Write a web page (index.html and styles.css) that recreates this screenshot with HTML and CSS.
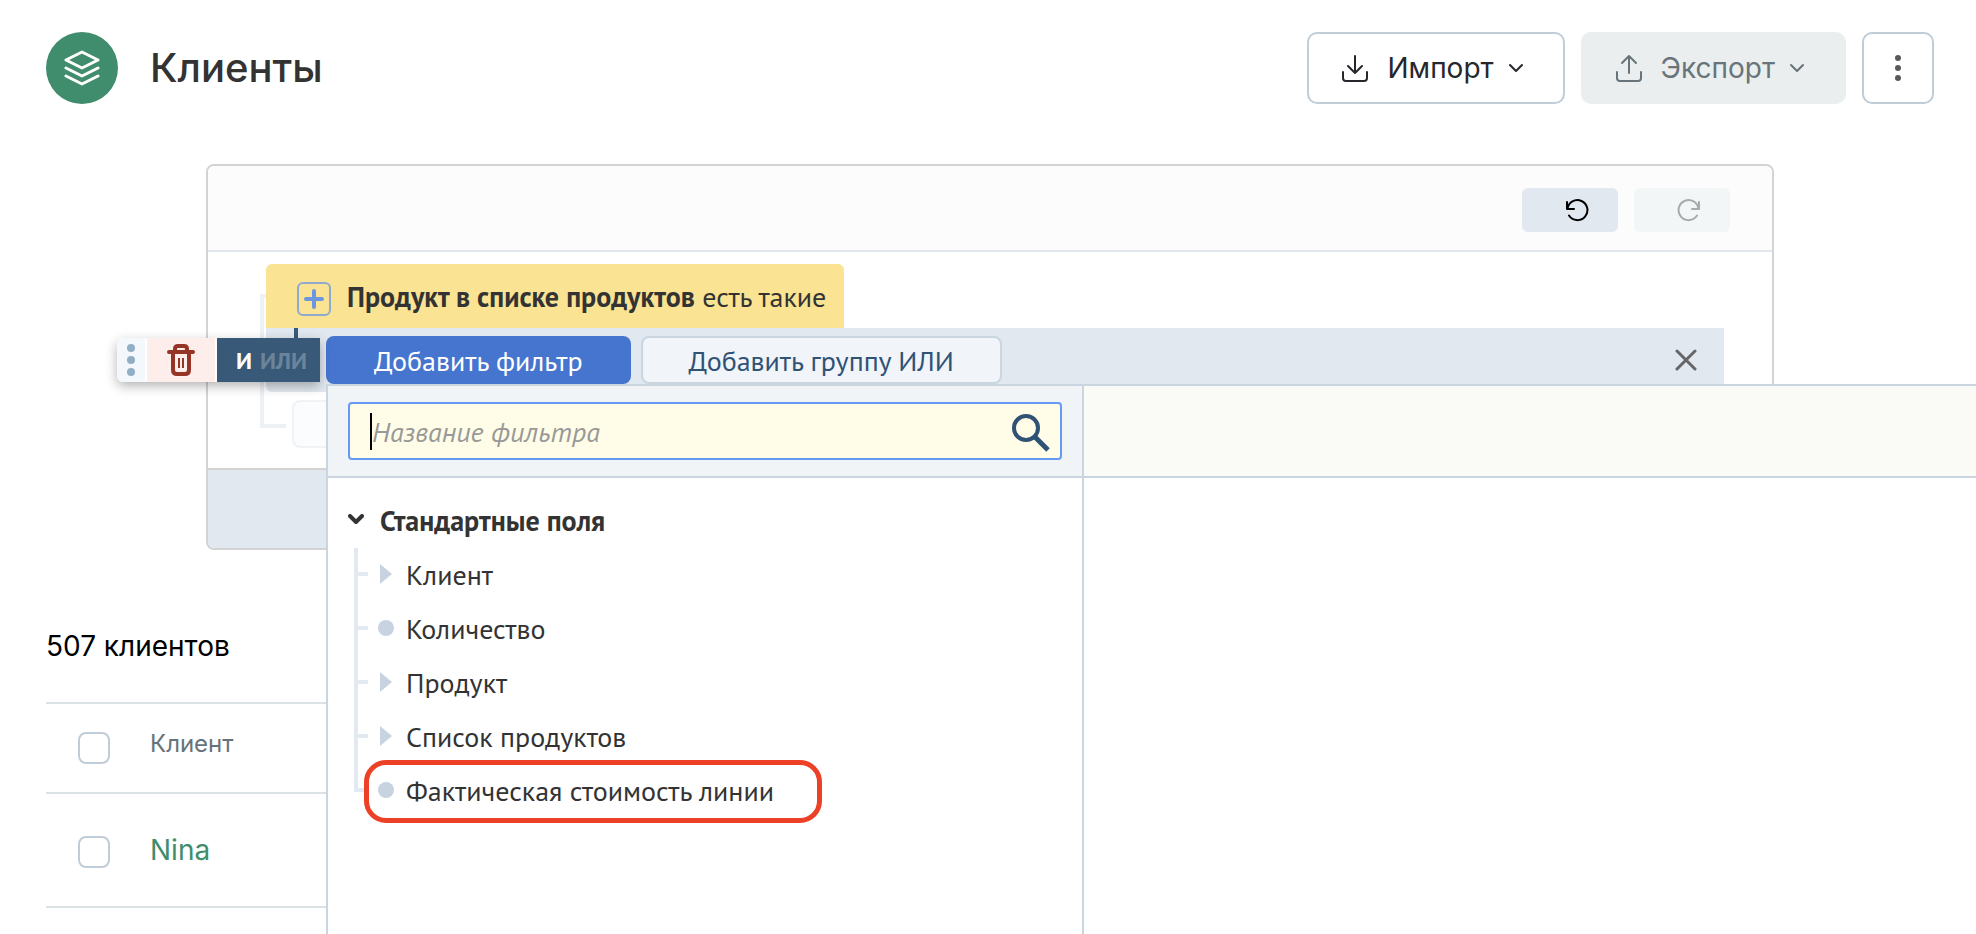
FILE: index.html
```html
<!DOCTYPE html>
<html lang="ru">
<head>
<meta charset="utf-8">
<title>Клиенты</title>
<link rel="stylesheet" href="styles.css">
</head>
<body>
<div class="page">
  <header class="topbar">
    <span class="logo">
      <svg width="36" height="36" viewBox="0 0 36 36" fill="none" stroke="#fff" stroke-width="3" stroke-linejoin="round" stroke-linecap="round"><path d="M18 2 34 10 18 18 2 10Z"/><path d="M2 18l16 8 16-8M2 26l16 8 16-8"/></svg>
    </span>
    <h1 class="title">Клиенты</h1>
    <div class="actions">
      <button class="btn" type="button">
        <svg width="28" height="28" viewBox="0 0 28 28" fill="none" stroke="currentColor" stroke-width="2" stroke-linecap="round" stroke-linejoin="round"><path d="M14 2v17M7 12l7 7 7-7M2 18v6q0 3 3 3h18q3 0 3-3v-6"/></svg>
        <span>Импорт</span>
        <svg class="caret" width="16" height="16" viewBox="0 0 16 16" fill="none" stroke="currentColor" stroke-width="2" stroke-linecap="round" stroke-linejoin="round"><path d="M2 5l6 6 6-6"/></svg>
      </button>
      <button class="btn btn-muted" type="button">
        <svg width="28" height="28" viewBox="0 0 28 28" fill="none" stroke="currentColor" stroke-width="2" stroke-linecap="round" stroke-linejoin="round"><path d="M14 19V2M7 9l7-7 7 7M2 18v6q0 3 3 3h18q3 0 3-3v-6"/></svg>
        <span>Экспорт</span>
        <svg class="caret" width="16" height="16" viewBox="0 0 16 16" fill="none" stroke="currentColor" stroke-width="2" stroke-linecap="round" stroke-linejoin="round"><path d="M2 5l6 6 6-6"/></svg>
      </button>
      <button class="btn btn-more" type="button" aria-label="Ещё">
        <svg width="6" height="26" viewBox="0 0 6 26" fill="#575b5e"><circle cx="3" cy="3" r="3"/><circle cx="3" cy="13" r="3"/><circle cx="3" cy="23" r="3"/></svg>
      </button>
    </div>
  </header>

  <section class="panel">
    <div class="panel-head">
      <button class="history" type="button" aria-label="Отменить">
        <svg width="24" height="24" viewBox="0 0 24 24" fill="none" stroke="#000" stroke-width="2" stroke-linecap="round" stroke-linejoin="round"><path d="M2 4v7h7M2.500 11A10 10 0 1 1 4 17.500"/></svg>
      </button>
      <button class="history history-off" type="button" aria-label="Повторить" disabled>
        <svg width="24" height="24" viewBox="0 0 24 24" fill="none" stroke="#a8abad" stroke-width="2" stroke-linecap="round" stroke-linejoin="round"><path d="M22 4v7h-7M21.500 11A10 10 0 1 0 20 17.500"/></svg>
      </button>
    </div>
    <div class="panel-body">
      <div class="branch"></div>
      <div class="rules">
        <div class="rule">
          <button class="plus" type="button" aria-label="Развернуть">
            <svg width="20" height="20" viewBox="0 0 20 20" stroke="#6c96de" stroke-width="4" stroke-linecap="round"><path d="M10 2v16M2 10h16"/></svg>
          </button>
          <span><b>Продукт в списке продуктов</b> есть такие</span>
        </div>
        <div class="group">
          <button class="add add-main" type="button">Добавить фильтр</button>
          <button class="add add-alt" type="button">Добавить группу ИЛИ</button>
          <button class="close" type="button" aria-label="Закрыть">
            <svg width="22" height="22" viewBox="0 0 22 22" stroke="#666" stroke-width="3" stroke-linecap="round"><path d="M2 2l18 18M20 2 2 20"/></svg>
          </button>
          <div class="toolbar">
            <span class="grip">
              <svg width="8" height="32" viewBox="0 0 8 32" fill="#91aec4"><circle cx="4" cy="4" r="4"/><circle cx="4" cy="16" r="4"/><circle cx="4" cy="28" r="4"/></svg>
            </span>
            <button class="trash" type="button" aria-label="Удалить">
              <svg width="28" height="32" viewBox="0 0 28 32" fill="none" stroke="#963526"><path stroke-width="4" stroke-linecap="round" stroke-linejoin="round" d="M2 8h24M6 8v18q0 4 4 4h8q4 0 4-4V8M8 7V5q0-3 3-3h6q3 0 3 3v2"/><path stroke-width="2" d="M12 14v10M16 14v10"/></svg>
            </button>
            <button class="logic" type="button"><b>И</b><b class="logic-off">ИЛИ</b></button>
          </div>
        </div>
        <div class="ghost"></div>
      </div>
    </div>
    <div class="panel-foot"></div>
  </section>

  <p class="count">507 клиентов</p>
  <table class="list">
    <thead>
      <tr>
        <th class="pick"><input class="check" type="checkbox" aria-label="Выбрать всех"></th>
        <th class="name">Клиент</th>
      </tr>
    </thead>
    <tbody>
      <tr>
        <td class="pick"><input class="check" type="checkbox" aria-label="Выбрать Nina"></td>
        <td class="name"><a href="#">Nina</a></td>
      </tr>
    </tbody>
  </table>

  <div class="popup">
    <div class="popup-main">
      <div class="popup-search">
        <label class="search">
          <span class="cursor"></span>
          <input type="text" placeholder="Название фильтра" aria-label="Название фильтра">
          <svg width="38" height="38" viewBox="0 0 38 38" fill="none" stroke="#2f5275" stroke-width="4"><circle cx="14" cy="14" r="12"/><path stroke-width="5" d="M23 23l13 13"/></svg>
        </label>
      </div>
      <div class="tree">
        <div class="tree-title">
          <svg width="16" height="12" viewBox="0 0 16 12" fill="none" stroke="#333" stroke-width="4" stroke-linecap="round" stroke-linejoin="round"><path d="M2 2l6 6 6-6"/></svg>
          <b>Стандартные поля</b>
        </div>
        <ul class="items">
          <li class="item"><i class="arrow"></i>Клиент</li>
          <li class="item"><i class="dot"></i>Количество</li>
          <li class="item"><i class="arrow"></i>Продукт</li>
          <li class="item"><i class="arrow"></i>Список продуктов</li>
          <li class="item"><i class="dot"></i>Фактическая стоимость линии<span class="marker"></span></li>
        </ul>
      </div>
    </div>
    <div class="popup-side"><div class="side-head"></div></div>
  </div>
</div>
</body>
</html>
```

FILE: styles.css
```css
* { box-sizing: border-box; }
body { margin: 0; background: #fff; color: #333; font-family: Inter, sans-serif; font-size: 28px; }
button { font: inherit; color: inherit; border: 0; margin: 0; padding: 0; background: none; cursor: pointer; }
svg { flex: none; display: block; }
.page { position: relative; min-height: 100vh; padding: 32px 42px 0 46px; overflow: hidden; }

.topbar { display: flex; align-items: center; }
.logo { display: flex; align-items: center; justify-content: center; width: 72px; height: 72px; border-radius: 50%; background: #3f8d6c; }
.title { margin: 0 0 0 32px; font-size: 40px; font-weight: 500; line-height: 72px; }
.actions { display: flex; gap: 16px; margin-left: auto; }
.btn { display: flex; align-items: center; height: 72px; padding: 0 39px 0 32px; border: 2px solid #c0ccd7; border-radius: 10px; background: #fff; color: #26272c; }
.btn span { margin: 0 14px 0 18px; }
.btn-muted { border-color: #eaeeee; background: #eaeeee; color: #68747a; }
.btn-more { justify-content: center; width: 72px; padding: 0; }

.panel { margin: 60px 160px 0; border: 2px solid #d3d3d3; border-radius: 8px; font-family: "PT Sans", "Noto Sans", sans-serif; font-size: 28px; }
.panel-head { display: flex; justify-content: flex-end; align-items: center; gap: 16px; height: 86px; padding: 4px 42px 0 0; border-bottom: 2px solid #e1e8ef; border-radius: 6px 6px 0 0; background: #fcfcfc; }
.history { display: flex; align-items: center; justify-content: center; width: 96px; height: 44px; padding-left: 14px; border-radius: 6px; background: #e1e8ef; }
.history-off { background: #f2f6f6; }
.panel-body { display: flex; padding: 12px 48px 20px 52px; }
.branch { flex: none; width: 26px; margin: 30px -20px 20px 0; border: 4px solid #edf1f6; border-right: 0; }
.rules { position: relative; flex: 1; }
.rule { display: flex; align-items: center; gap: 16px; width: fit-content; height: 64px; padding: 0 18px 0 31px; border-radius: 6px 6px 0 0; background: #fae392; white-space: nowrap; }
.plus { display: flex; align-items: center; justify-content: center; width: 34px; height: 34px; margin-top: 6px; border: 2px solid #8fa9d0; border-radius: 6px; }
.group { position: relative; display: flex; gap: 10px; height: 64px; padding: 8px 27px 8px 60px; border-radius: 0 0 6px 6px; background: #e1e8ef; }
.group::before { content: ""; position: absolute; left: 28px; top: 0; width: 4px; height: 12px; background: #385977; }
.add { height: 48px; border-radius: 8px; white-space: nowrap; }
.add-main { padding: 0 48px; background: #4675d0; color: #fff; }
.add-alt { padding: 0 46px; border: 2px solid #cad5df; background: #f1f4f8; color: #2f5275; }
.close { margin-left: auto; }
.toolbar { position: absolute; left: -149px; top: 10px; display: flex; gap: 2px; height: 44px; border-radius: 6px 0 0 6px; background: #fff; box-shadow: 0 4px 12px rgba(0, 0, 0, .3); }
.grip { display: flex; align-items: center; justify-content: center; width: 28px; border-radius: 6px 0 0 6px; background: #f4f7fb; }
.trash { display: flex; align-items: center; justify-content: center; width: 68px; background: #fdedeb; }
.logic { display: flex; align-items: center; justify-content: center; gap: 8px; width: 103px; padding-left: 6px; background: #385977; color: #fff; font-size: 24px; }
.logic-off { color: #6a849b; }
.ghost { height: 48px; margin: 8px 0 0 26px; border: 2px solid #f0f3f6; border-radius: 8px; background: #fbfcfe; }
.panel-foot { height: 80px; border-top: 2px solid #d3d3d3; border-radius: 0 0 6px 6px; background: #e1e8ef; }

.count { margin: 78px 0 38px; line-height: 36px; color: #000; }
.list { width: 100%; border-collapse: collapse; border-top: 2px solid #dbe2e6; }
.list tr { height: 90px; border-bottom: 2px solid #dbe2e6; }
.list tbody tr { height: 114px; }
.list th, .list td { padding: 0; text-align: left; font-weight: 400; }
.list .pick { width: 104px; padding-left: 32px; }
.list td.pick { padding-top: 4px; }
.list th.name { padding-bottom: 10px; font-size: 24px; color: #66737a; }
.list a { color: #3f8d6c; text-decoration: none; }
.check { appearance: none; display: block; width: 32px; height: 32px; margin: 0; border: 2px solid #c0ccd7; border-radius: 8px; background: #fff; }

.popup { position: absolute; left: 326px; right: 0; top: 384px; bottom: 0; display: flex; border: solid #cad5df; border-width: 2px 0 0 2px; background: #fff; font-family: "PT Sans", "Noto Sans", sans-serif; font-size: 28px; }
.popup-main { width: 756px; border-right: 2px solid #cad5df; }
.popup-search { height: 92px; padding: 16px 20px; border-bottom: 2px solid #cad5df; background: #f0f4f7; }
.search { display: flex; align-items: center; height: 58px; padding: 0 10px 0 20px; border: 2px solid #6599f4; border-radius: 4px; background: #fffde7; }
.search input { flex: 1; min-width: 0; height: 50px; padding: 0; border: 0; outline: 0; background: none; font: inherit; color: #333; }
.search input::placeholder { color: #999; font-style: italic; opacity: 1; }
.search svg { margin-top: 4px; }
.cursor { width: 2px; height: 37px; background: #000; }
.popup-side { flex: 1; }
.side-head { height: 92px; border-bottom: 2px solid #cad5df; background: #fafbf7; }
.tree { padding: 16px 20px; }
.tree-title { display: flex; align-items: center; gap: 16px; height: 52px; margin-bottom: 2px; }
.items { position: relative; width: fit-content; margin: 0 0 0 6px; padding: 0; list-style: none; }
.items::before { content: ""; position: absolute; left: 0; top: 0; bottom: 26px; width: 4px; background: #e2e9f0; }
.item { position: relative; display: flex; align-items: center; height: 52px; margin-bottom: 2px; padding-right: 48px; white-space: nowrap; }
.item::before { content: ""; width: 14px; height: 4px; margin-right: 10px; background: #e2e9f0; }
.dot { width: 16px; height: 16px; margin-right: 12px; border-radius: 50%; background: #c7d3e0; }
.arrow { width: 12px; height: 20px; margin: 0 14px 0 2px; background: #c7d3e0; clip-path: polygon(0 0, 100% 50%, 0 100%); }
.marker { position: absolute; left: 10px; right: 0; top: -4px; bottom: -7px; border: 5px solid #ec4126; border-radius: 22px; }
```
